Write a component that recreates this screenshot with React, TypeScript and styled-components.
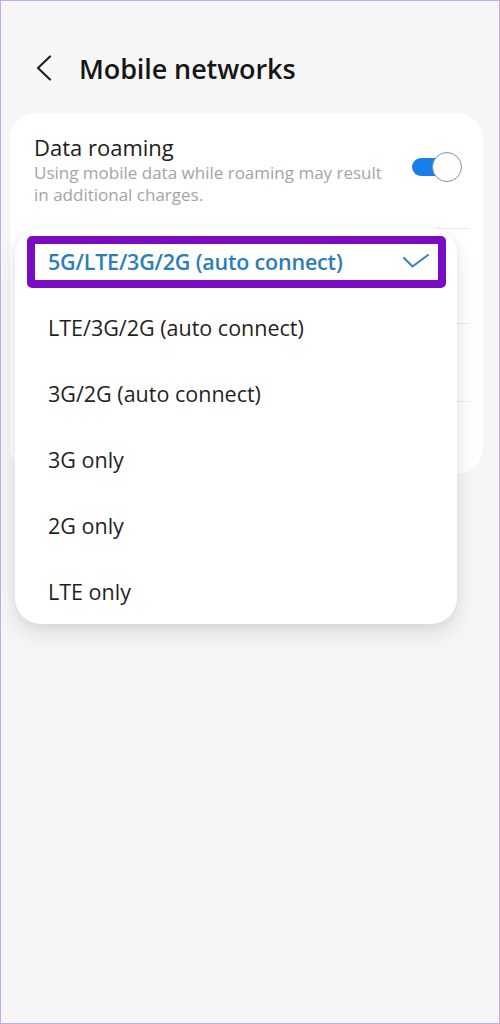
import React from "react";
import styled, { createGlobalStyle } from "styled-components";

const GlobalStyle = createGlobalStyle`
  html, body {
    margin: 0;
    padding: 0;
    background: #f6f6f6;
  }
  body {
    font-family: "Open Sans", "Noto Sans", sans-serif;
    -webkit-font-smoothing: antialiased;
  }
`;

const Frame = styled.div`
  position: relative;
  box-sizing: border-box;
  width: 500px;
  height: 1024px;
  border: 1px solid #c7a9e2;
  background: #f6f6f6;
  overflow: hidden;
`;

const Header = styled.header`
  display: flex;
  align-items: center;
  height: 46px;
  margin-top: 44px;
  padding-left: 34px;
`;

const BackButton = styled.button`
  display: flex;
  align-items: center;
  justify-content: center;
  width: 18px;
  height: 28px;
  padding: 0;
  margin-right: 26px;
  border: none;
  background: none;
`;

const Title = styled.h1`
  margin: 0;
  font-size: 27px;
  font-weight: 600;
  color: #161616;
  letter-spacing: -0.1px;
`;

const Card = styled.section`
  margin: 22px 0 0 9px;
  width: 473px;
  background: #ffffff;
  border-radius: 26px;
  overflow: hidden;
`;

const SettingRow = styled.div<{ $height: number }>`
  display: flex;
  align-items: center;
  justify-content: space-between;
  box-sizing: border-box;
  height: ${p => p.$height}px;
  padding: 0 21px 0 24px;
`;

const SettingText = styled.div`
  display: flex;
  flex-direction: column;
  margin-top: -4px;
`;

const SettingTitle = styled.span`
  font-size: 22px;
  color: #1c1c1c;
  line-height: 30px;
`;

const SettingHint = styled.span`
  width: 356px;
  font-size: 17px;
  line-height: 22px;
  color: #a4a4a4;
`;

const Divider = styled.hr`
  margin: 0 13px 0 24px;
  border: none;
  border-top: 1px solid #ececec;
`;

const Toggle = styled.span<{ $on: boolean }>`
  position: relative;
  display: inline-block;
  width: 50px;
  height: 30px;
  margin-top: -8px;

  &::before {
    content: "";
    position: absolute;
    left: 0;
    top: 6px;
    width: 44px;
    height: 18px;
    border-radius: 9px;
    background: ${p => (p.$on ? "#1a7ee8" : "#c9c9c9")};
  }

  &::after {
    content: "";
    position: absolute;
    top: 0;
    left: ${p => (p.$on ? "20px" : "0")};
    box-sizing: border-box;
    width: 30px;
    height: 30px;
    border-radius: 50%;
    background: #fff;
    border: 1.5px solid #7d93ab;
  }
`;

const Popup = styled.ul`
  position: absolute;
  left: 14px;
  top: 227px;
  width: 442px;
  margin: 0;
  padding: 0;
  list-style: none;
  background: #ffffff;
  border-radius: 26px;
  box-shadow: 0 10px 22px rgba(0, 0, 0, 0.1), 0 2px 8px rgba(0, 0, 0, 0.05);
`;

const Option = styled.li<{ $selected?: boolean }>`
  position: relative;
  display: flex;
  align-items: center;
  justify-content: space-between;
  box-sizing: border-box;
  height: 66px;
  padding: 0 27px 0 33px;
  font-size: 21.5px;
  font-weight: ${p => (p.$selected ? 600 : 400)};
  color: ${p => (p.$selected ? "#2d7db6" : "#1f1f1f")};
  letter-spacing: ${p => (p.$selected ? "-0.2px" : "0")};

  ${p =>
    p.$selected &&
    `
    &::after {
      content: "";
      position: absolute;
      left: 12px;
      right: 11px;
      top: 8px;
      bottom: 6px;
      border: 8px solid #7a0cc6;
      border-radius: 5px;
    }
  `}
`;

const options = [
  "5G/LTE/3G/2G (auto connect)",
  "LTE/3G/2G (auto connect)",
  "3G/2G (auto connect)",
  "3G only",
  "2G only",
  "LTE only",
];

const ChevronLeft = () => (
  <svg width="16" height="26" viewBox="0 0 16 26" fill="none">
    <path d="M14 1.5 L2 13 L14 24.5" stroke="#222" strokeWidth="2.2" strokeLinecap="round" strokeLinejoin="round" />
  </svg>
);

const Check = () => (
  <svg width="28" height="16" viewBox="0 0 28 16" fill="none">
    <path d="M2 5 L10.5 13.5 L26 2" stroke="#3a7fb1" strokeWidth="2" strokeLinecap="round" strokeLinejoin="round" />
  </svg>
);

export default function App() {
  const selected = 0;

  return (
    <>
      <GlobalStyle />
      <Frame>
        <Header>
          <BackButton aria-label="Back">
            <ChevronLeft />
          </BackButton>
          <Title>Mobile networks</Title>
        </Header>

        <Card>
          <SettingRow $height={115}>
            <SettingText>
              <SettingTitle>Data roaming</SettingTitle>
              <SettingHint>Using mobile data while roaming may result in additional charges.</SettingHint>
            </SettingText>
            <Toggle $on={true} />
          </SettingRow>
          <Divider />
          <SettingRow $height={94} />
          <Divider />
          <SettingRow $height={77} />
          <Divider />
          <SettingRow $height={72} />
        </Card>

        <Popup>
          {options.map((label, i) => (
            <Option key={label} $selected={i === selected}>
              {label}
              {i === selected && <Check />}
            </Option>
          ))}
        </Popup>
      </Frame>
    </>
  );
}
